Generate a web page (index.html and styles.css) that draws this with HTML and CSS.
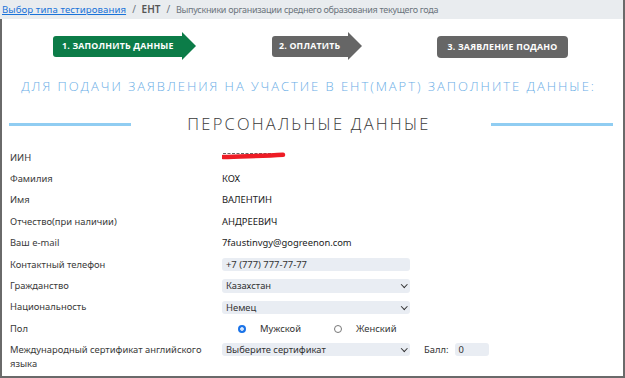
FILE: index.html
```html
<!DOCTYPE html>
<html lang="ru">
<head>
<meta charset="utf-8">
<link rel="stylesheet" href="styles.css">
</head>
<body>
<div class="page">
  <nav class="crumbs">
    <a href="#" class="crumb-link">Выбор типа тестирования</a>
    <span class="sep">/</span>
    <span class="crumb-mid">ЕНТ</span>
    <span class="sep">/</span>
    <span class="crumb-cur">Выпускники организации среднего образования текущего года</span>
  </nav>
  <main class="content">
    <div class="steps">
      <div class="step step-active">1. ЗАПОЛНИТЬ ДАННЫЕ</div>
      <div class="step step-next">2. ОПЛАТИТЬ</div>
      <div class="step step-last">3. ЗАЯВЛЕНИЕ ПОДАНО</div>
    </div>
    <h1 class="lead">ДЛЯ ПОДАЧИ ЗАЯВЛЕНИЯ НА УЧАСТИЕ В ЕНТ(МАРТ) ЗАПОЛНИТЕ ДАННЫЕ:</h1>
    <div class="section">
      <span class="rule"></span>
      <h2 class="section-title">ПЕРСОНАЛЬНЫЕ ДАННЫЕ</h2>
      <span class="rule"></span>
    </div>
    <div class="form">
      <div class="row"><span class="label">ИИН</span><span class="value">
        <svg class="redact" width="64" height="10" viewBox="0 0 64 10"><path d="M1 2.5 H62" stroke="#666" stroke-width="1.2" stroke-dasharray="3 1.5"/><path d="M1 6 C20 5 40 5.2 61 3.8" stroke="#ee1c25" stroke-width="4.5" fill="none" stroke-linecap="round"/></svg>
      </span></div>
      <div class="row"><span class="label">Фамилия</span><span class="value">КОХ</span></div>
      <div class="row"><span class="label">Имя</span><span class="value">ВАЛЕНТИН</span></div>
      <div class="row"><span class="label">Отчество(при наличии)</span><span class="value">АНДРЕЕВИЧ</span></div>
      <div class="row"><span class="label">Ваш e-mail</span><span class="value">7faustinvgy@gogreenon.com</span></div>
      <div class="row"><span class="label">Контактный телефон</span><span class="field">+7 (777) 777-77-77</span></div>
      <div class="row"><span class="label">Гражданство</span><span class="field select">Казахстан</span></div>
      <div class="row"><span class="label">Национальность</span><span class="field select">Немец</span></div>
      <div class="row"><span class="label">Пол</span>
        <span class="radios">
          <span class="radio"><span class="dot dot-on"></span>Мужской</span>
          <span class="radio"><span class="dot"></span>Женский</span>
        </span>
      </div>
      <div class="row row-tall"><span class="label">Международный сертификат английского языка</span>
        <span class="field select">Выберите сертификат</span>
        <span class="score"><span class="score-label">Балл:</span><span class="field score-field">0</span></span>
      </div>
    </div>
  </main>
</div>
</body>
</html>
```
FILE: styles.css
```css
* { box-sizing: border-box; margin: 0; padding: 0; }
html, body { width: 625px; height: 378px; overflow: hidden; background: #fff; }
body { font-family: "Noto Sans", "Open Sans", sans-serif; color: #333; }

.page {
  width: 625px;
  height: 378px;
  border-right: 2px solid #6a6a6a;
  border-bottom: 2px solid #6a6a6a;
  display: flex;
  flex-direction: column;
}

.crumbs {
  height: 19px;
  background: #e9ecef;
  font-size: 9px;
  letter-spacing: -0.3px;
  line-height: 18px;
  padding-left: 2px;
  white-space: nowrap;
  overflow: hidden;
  color: #6c757d;
}
.crumb-link { color: #1a73d9; text-decoration: underline; font-size: 9.6px; letter-spacing: 0.1px; }
.sep { margin: 0 4px; color: #6c757d; font-size: 10px; }
.crumb-mid { color: #555; font-weight: 600; font-size: 10px; letter-spacing: 0; }

.content {
  flex: 1;
  border-left: 2px solid #6a6a6a;
  display: flex;
  flex-direction: column;
}

.steps {
  display: flex;
  align-items: center;
  height: 29px;
  margin-top: 13px;
  padding-left: 51px;
}
.step {
  position: relative;
  height: 21px;
  line-height: 21px;
  color: #fff;
  font-family: "Open Sans", "Noto Sans", sans-serif;
  font-weight: 700;
  font-size: 8.8px;
  letter-spacing: 0.2px;
  white-space: nowrap;
}
.step-active {
  width: 129px;
  background: #0c7c48;
  border-radius: 3px 0 0 3px;
  padding-left: 9px;
}
.step-next {
  width: 76px;
  background: #666;
  border-radius: 3px 0 0 3px;
  padding-left: 7px;
  margin-left: 90px;
}
.step-active::after, .step-next::after {
  content: "";
  position: absolute;
  right: -14px;
  top: -4px;
  border-top: 14.5px solid transparent;
  border-bottom: 14.5px solid transparent;
  border-left: 14px solid #0c7c48;
}
.step-next::after { border-left-color: #666; }
.step-last {
  width: 131px;
  height: 22px;
  line-height: 22px;
  background: #666;
  border-radius: 4px;
  text-align: center;
  margin-left: 89px;
}

.lead {
  margin-top: 17px;
  text-align: center;
  font-family: "Open Sans", "Noto Sans", sans-serif;
  font-weight: 300;
  font-size: 13px;
  line-height: 16px;
  letter-spacing: 1.95px;
  color: #6aaee6;
  white-space: nowrap;
  padding-right: 8px;
}

.section {
  display: flex;
  align-items: center;
  justify-content: space-between;
  padding: 0 10px 0 7px;
  margin-top: 19px;
  height: 22px;
}
.rule { width: 122px; height: 3px; background: #90cdf2; }
.section-title {
  font-family: "Open Sans", "Noto Sans", sans-serif;
  font-weight: 300;
  font-size: 16.5px;
  letter-spacing: 2.2px;
  color: #3a3a3a;
  line-height: 22px;
  margin-left: -4px;
}

.form {
  margin-top: 12px;
  padding-left: 8px;
  font-size: 9.4px;
}
.row {
  display: grid;
  grid-template-columns: 212px 188px auto;
  align-items: center;
  height: 21.4px;
}
.row-tall { align-items: start; height: 30px; margin-top: 3px; }
.label { color: #3a3a3a; line-height: 14px; }
.row-tall .label { padding-right: 12px; }
.value { color: #222; line-height: 14px; display: flex; align-items: center; }
.redact { display: block; margin-top: -3px; }

.field {
  display: block;
  height: 13.5px;
  line-height: 13.5px;
  background: #e9edf3;
  border-radius: 3px;
  padding-left: 4px;
  color: #333;
  position: relative;
}
.select::after {
  content: "";
  position: absolute;
  right: 4px;
  top: 3px;
  width: 3.5px;
  height: 3.5px;
  border-right: 1.6px solid #333;
  border-bottom: 1.6px solid #333;
  transform: rotate(45deg);
}

.radios { display: flex; align-items: center; padding-left: 16px; grid-column: 2 / 4; }
.radio { display: flex; align-items: center; }
.radio + .radio { margin-left: 33px; }
.dot {
  width: 8px; height: 8px;
  border-radius: 50%;
  border: 1px solid #777;
  margin-right: 14px;
  background: #fff;
}
.dot-on { border: 2px solid #1a73e8; background: #1a73e8; box-shadow: inset 0 0 0 1.5px #fff; }

.score { display: flex; align-items: center; margin-left: 14px; }
.score-label { margin-right: 6px; }
.score-field { width: 34px; }
```
